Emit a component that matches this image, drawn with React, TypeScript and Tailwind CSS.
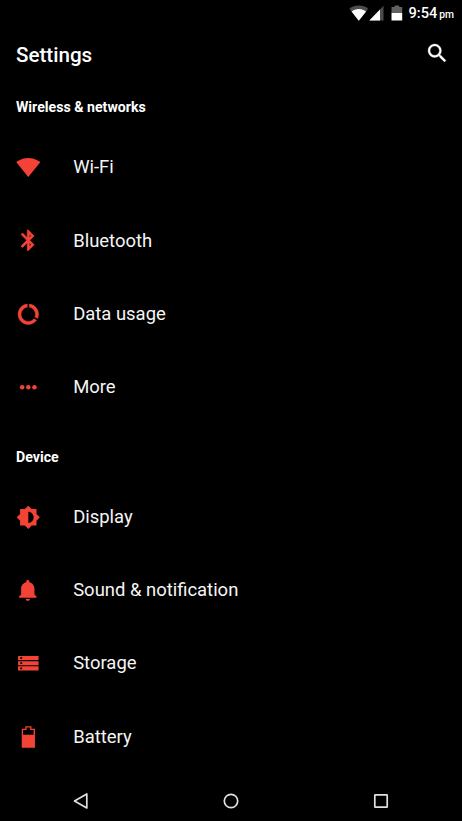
import React from 'react';

interface SettingItem {
  label: string;
  icon: React.ReactNode;
}

interface SettingSection {
  title: string;
  items: SettingItem[];
}

const sections: SettingSection[] = [
  {
    title: 'Wireless & networks',
    items: [
      {
        label: 'Wi-Fi',
        icon: (
          <path d="M12.01 21.49L23.64 7c-.45-.34-4.93-4-11.64-4C5.28 3 .81 6.66.36 7l11.63 14.49.01.01.01-.01z" />
        ),
      },
      {
        label: 'Bluetooth',
        icon: (
          <path
            stroke="#f44336"
            strokeWidth=".7"
            d="M17.71 7.71L12 2h-1v7.59L6.41 5 5 6.41 10.59 12 5 17.59 6.41 19 11 14.41V22h1l5.71-5.71-4.3-4.29 4.3-4.29zM13 5.83l1.88 1.88L13 9.59V5.83zm1.88 10.46L13 18.17v-3.76l1.88 1.88z"
          />
        ),
      },
      {
        label: 'Data usage',
        icon: (
          <path
            stroke="#f44336"
            strokeWidth=".4"
            d="M13 2.05v3.03c3.39.49 6 3.39 6 6.92 0 .9-.18 1.75-.48 2.54l2.6 1.53c.56-1.24.88-2.62.88-4.07 0-5.18-3.95-9.45-9-9.95zM12 19c-3.87 0-7-3.13-7-7 0-3.53 2.61-6.43 6-6.92V2.05c-5.06.5-9 4.76-9 9.95 0 5.52 4.47 10 9.99 10 3.31 0 6.24-1.61 8.06-4.09l-2.6-1.53C16.17 17.98 14.21 19 12 19z"
          />
        ),
      },
      {
        label: 'More',
        icon: (
          <>
            <circle cx="6" cy="12" r="2.2" />
            <circle cx="12" cy="12" r="2.2" />
            <circle cx="18" cy="12" r="2.2" />
          </>
        ),
      },
    ],
  },
  {
    title: 'Device',
    items: [
      {
        label: 'Display',
        icon: (
          <path d="M20 15.31L23.31 12 20 8.69V4h-4.69L12 .69 8.69 4H4v4.69L.69 12 4 15.31V20h4.69L12 23.31 15.31 20H20v-4.69zM12 17.5V6.5c3 0 5.2 2.5 5.2 5.5s-2.2 5.5-5.2 5.5z" />
        ),
      },
      {
        label: 'Sound & notification',
        icon: (
          <path d="M11.5 22.3c1.1 0 2-.8 2-1.9h-4c0 1.1.9 1.9 2 1.9zm6.5-6.3v-5.5c0-3.07-2.13-5.64-5-6.32V3.5c0-.83-.67-1.5-1.5-1.5S10 2.67 10 3.5v.68c-2.87.68-5 3.25-5 6.32V16l-2 2v1.3h17V18l-2-2z" />
        ),
      },
      {
        label: 'Storage',
        icon: (
          <path
            fillRule="evenodd"
            d="M2 4.8h20v4H2zM4.2 5.9v1.8H6V5.9zM2 9.9h20v4H2zM4.2 11v1.8H6V11zM2 15h20v4H2zM4.2 16.1v1.8H6v-1.8z"
          />
        ),
      },
      {
        label: 'Battery',
        icon: (
          <path
            fillRule="evenodd"
            d="M5.6 3.6h3.5V1.2h6v2.4h3.4V22.2H5.6zM6.9 4.8v4.6h10.3V4.8h-3.3V2.4h-3.6v2.4z"
          />
        ),
      },
    ],
  },
];

function StatusBar() {
  return (
    <div className="flex h-[25px] items-center justify-end pr-2 text-white">
      <svg width="20" height="16" viewBox="0 0 20 16">
        <path d="M9.8 15.7L19.2 3.8C16.6 1.8 13.3.6 9.8.6S3 1.8.4 3.8z" fill="#4d4d4d" />
        <path d="M9.8 15.7l7.3-9.2C15.1 5 12.6 4.1 9.8 4.1S4.5 5 2.5 6.5z" fill="#fff" />
      </svg>
      <svg width="16" height="16" viewBox="0 0 16 16">
        <path d="M.3 15.5L14.5.8v14.7z" fill="#4d4d4d" />
        <path d="M.3 15.5L11 4.5v11z" fill="#fff" />
      </svg>
      <svg className="ml-[6px]" width="12" height="16" viewBox="0 0 12 16">
        <path d="M.5 2h3V.5h4.7V2h3v6H.5z" fill="#616161" />
        <path d="M.5 8h10.7v7.5H.5z" fill="#fff" />
      </svg>
      <span className="mt-px ml-1.5 flex items-baseline text-[14.6px] leading-none font-medium">
        9:54
        <span className="ml-0.5 text-[10.3px]">pm</span>
      </span>
    </div>
  );
}

function Toolbar() {
  return (
    <header className="flex h-[60px] items-center justify-between pr-3 pl-4">
      <h1 className="text-[20.6px] leading-none font-medium">Settings</h1>
      <svg
        className="mb-1"
        width="24.6"
        height="24.6"
        viewBox="0 0 24 24"
        fill="#fff"
        stroke="#fff"
        strokeWidth=".3"
      >
        <path d="M15.5 14h-.79l-.28-.27C15.41 12.59 16 11.11 16 9.5 16 5.91 13.09 3 9.5 3S3 5.91 3 9.5 5.91 16 9.5 16c1.61 0 3.09-.59 4.23-1.57l.27.28v.79l5 4.99L20.49 19l-4.99-5zm-6 0C7.01 14 5 11.99 5 9.5S7.01 5 9.5 5 14 7.01 14 9.5 11.99 14 9.5 14z" />
      </svg>
    </header>
  );
}

function Section({ title, items }: SettingSection) {
  return (
    <section>
      <h2 className="flex h-[56.6px] items-center pt-2.5 pl-4 text-[14.15px] font-bold">{title}</h2>
      <ul>
        {items.map((item) => (
          <li key={item.label} className="flex h-[73.25px] items-center pl-[16.2px]">
            <svg className="mr-8 shrink-0" width="24.6" height="24.6" viewBox="0 0 24 24" fill="#f44336">
              {item.icon}
            </svg>
            <span className="ml-[0.4px] text-[18.45px] leading-none text-[#f5f5f5]">{item.label}</span>
          </li>
        ))}
      </ul>
    </section>
  );
}

function NavigationBar() {
  return (
    <nav className="grid h-[41px] grid-cols-3 place-items-center px-[6px]">
      <svg width="18" height="18" viewBox="0 0 18 18" fill="none" stroke="#e0e0e0" strokeWidth="1.7">
        <path d="M2.5 9l12.3-7v14z" strokeLinejoin="round" />
      </svg>
      <svg width="18" height="18" viewBox="0 0 18 18" fill="none" stroke="#e0e0e0" strokeWidth="1.7">
        <circle cx="9" cy="9" r="6.7" />
      </svg>
      <svg width="18" height="18" viewBox="0 0 18 18" fill="none" stroke="#e0e0e0" strokeWidth="1.7">
        <rect x="2.8" y="2.8" width="12.4" height="12.4" rx=".5" />
      </svg>
    </nav>
  );
}

export default function App() {
  return (
    <div className="flex h-screen w-full flex-col overflow-hidden bg-black font-[Roboto,sans-serif] text-white">
      <StatusBar />
      <Toolbar />
      <main className="-mt-[10.7px] min-h-0 flex-1 overflow-hidden">
        {sections.map((section) => (
          <Section key={section.title} {...section} />
        ))}
      </main>
      <NavigationBar />
    </div>
  );
}
